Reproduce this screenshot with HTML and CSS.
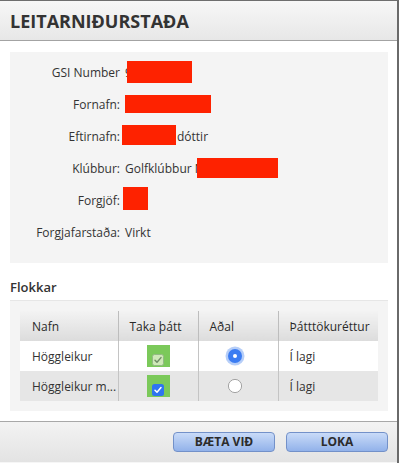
FILE: index.html
```html
<!DOCTYPE html>
<html lang="is">
<head>
<meta charset="utf-8">
<title>Leitarniðurstaða</title>
<link rel="stylesheet" href="styles.css">
</head>
<body>
<div class="dialog">
  <div class="dlg-head"><h1 class="title">LEITARNIÐURSTAÐA</h1></div>
  <div class="dlg-body">
    <div class="info">
      <div class="row"><span class="lbl">GSI Number</span><span class="val"><span class="peek">9</span><span class="mask m-gsi"></span></span></div>
      <div class="row"><span class="lbl">Fornafn:</span><span class="val"><span class="mask m-first"></span></span></div>
      <div class="row"><span class="lbl">Eftirnafn:</span><span class="val"><span class="mask m-last"></span>dóttir</span></div>
      <div class="row"><span class="lbl">Klúbbur:</span><span class="val">Golfklúbbur&nbsp;<span class="peek">N</span><span class="mask m-club"></span></span></div>
      <div class="row"><span class="lbl">Forgjöf:</span><span class="val"><span class="mask m-hcp"></span></span></div>
      <div class="row"><span class="lbl">Forgjafarstaða:</span><span class="val">Virkt</span></div>
    </div>
    <div class="sec-title">Flokkar</div>
    <div class="cat-panel">
      <table class="cats">
        <colgroup><col class="c1"><col class="c2"><col class="c3"><col class="c4"></colgroup>
        <thead>
          <tr><th>Nafn</th><th>Taka þátt</th><th>Aðal</th><th>Þátttökuréttur</th></tr>
        </thead>
        <tbody>
          <tr>
            <td>Höggleikur</td>
            <td class="cb-cell"><span class="cb-wrap"><svg class="cb" viewBox="0 0 12 12" width="12" height="12"><rect x="0.5" y="0.5" width="11" height="11" rx="2" fill="#cfe9b8" stroke="#93b985"/><path d="M3 6.2 L5 8.3 L9 3.6" fill="none" stroke="#6f8b66" stroke-width="1.4" stroke-linecap="round" stroke-linejoin="round"/></svg></span></td>
            <td class="rd-cell"><svg class="rd on" viewBox="0 0 20 20" width="20" height="20"><circle cx="10" cy="10" r="9.5" fill="#a9c6f7" opacity="0.85"/><circle cx="10" cy="10" r="7" fill="#3b7cf2"/><circle cx="10" cy="10" r="2" fill="#fff"/></svg></td>
            <td>Í lagi</td>
          </tr>
          <tr class="alt">
            <td class="ellip">Höggleikur m...</td>
            <td class="cb-cell"><span class="cb-wrap"><svg class="cb" viewBox="0 0 12 12" width="12" height="12"><rect x="0" y="0" width="12" height="12" rx="2.5" fill="#2f74f0"/><path d="M3 6.2 L5 8.3 L9 3.6" fill="none" stroke="#fff" stroke-width="1.5" stroke-linecap="round" stroke-linejoin="round"/></svg></span></td>
            <td class="rd-cell"><svg class="rd" viewBox="0 0 20 20" width="20" height="20"><circle cx="10" cy="10" r="6.6" fill="#fff" stroke="#9a9a9a" stroke-width="0.9"/></svg></td>
            <td>Í lagi</td>
          </tr>
        </tbody>
      </table>
    </div>
  </div>
  <div class="dlg-foot">
    <button class="btn" type="button">BÆTA VIÐ</button>
    <button class="btn" type="button">LOKA</button>
  </div>
</div>
</body>
</html>
```
FILE: styles.css
```css
* { box-sizing: border-box; }
html, body { margin: 0; padding: 0; background: #fff; }
body {
  font-family: "Open Sans", "Liberation Sans", sans-serif;
  font-size: 12px;
  color: #333;
}
.dialog {
  width: 399px;
  height: 463px;
  border-top: 1px solid #6e6e6e;
  border-right: 2px solid #6a6a6a;
  display: flex;
  flex-direction: column;
  background: #fff;
}
.dlg-head {
  height: 40px;
  display: flex;
  align-items: center;
  padding-left: 10px;
  background: linear-gradient(#f7f7f7, #e7e7e7);
  border-bottom: 1px solid #a3a3a3;
}
.title {
  margin: 0;
  font-size: 18px;
  font-weight: 700;
  color: #333;
  letter-spacing: 0;
  line-height: 1;
}
.dlg-body {
  flex: 1;
  padding: 11px 9px 9px 10px;
  display: flex;
  flex-direction: column;
}
.info {
  background: #f4f4f4;
  padding: 4px 0 15px;
}
.row {
  height: 32px;
  display: grid;
  grid-template-columns: 110px 1fr;
  column-gap: 5px;
  align-items: center;
}
.lbl { text-align: right; color: #333; }
.val { display: flex; align-items: center; color: #333; }
.peek { display: inline-block; }
.mask {
  display: inline-block;
  background: #fe2200;
  position: relative;
  z-index: 1;
}
.m-gsi { width: 65px; height: 22px; margin-left: -5px; }
.m-first { width: 86px; height: 18px; }
.m-last { width: 54px; height: 20px; margin-left: -3px; margin-right: 1px; margin-top: -3px; }
.m-club { width: 81px; height: 20px; margin-left: -7px; }
.m-hcp { width: 25px; height: 23px; margin-left: -2px; margin-top: -3px; }
.sec-title {
  margin: 15px 0 4px;
  height: 18px;
  line-height: 18px;
  font-size: 13px;
  font-weight: 600;
  color: #333;
}
.cat-panel {
  background: #f4f4f4;
  border-top: 1px solid #e6e6e6;
  padding: 10px 10px 10px;
}
.cats {
  width: 358px;
  border-collapse: collapse;
  table-layout: fixed;
}
.c1 { width: 98px; }
.c2 { width: 80px; }
.c3 { width: 80px; }
.c4 { width: 100px; }
.cats th, .cats td {
  height: 30px;
  padding: 0 0 0 11px;
  text-align: left;
  font-weight: 400;
  color: #333;
  white-space: nowrap;
  overflow: hidden;
  border-left: 1px solid #c4c4c4;
}
.cats th:first-child, .cats td:first-child { border-left: 0; padding-left: 12px; }
.cats th {
  background: linear-gradient(#f3f3f3, #dcdcdc);
  color: #2a2a2a;
  border-left-color: #bdbdbd;
}
.cats tbody tr { background: #fff; }
.cats tbody tr.alt { background: #e6e6e6; }
.cats td.cb-cell { padding: 0; text-align: center; }
.cb-wrap {
  display: inline-flex;
  width: 23px;
  height: 22px;
  background: #7bc95a;
  align-items: flex-end;
  justify-content: center;
  padding-bottom: 1px;
  vertical-align: middle;
}
.cb { display: block; }
.cats td.rd-cell { padding: 0 6px 0 0; text-align: center; }
.rd { display: inline-block; vertical-align: middle; }
.dlg-foot {
  height: 42px;
  border-top: 1px solid #a8a8a8;
  border-bottom: 1px solid #f6f6f6;
  background: linear-gradient(#f3f3f3, #e3e3e3);
  display: flex;
  justify-content: flex-end;
  align-items: center;
  gap: 11px;
  padding-right: 9px;
}
.btn {
  width: 102px;
  height: 20px;
  padding: 0;
  border: 1px solid #7391c9;
  border-radius: 4px;
  background: linear-gradient(#c9dbf8, #92b2ea);
  font-family: "Open Sans", "Liberation Sans", sans-serif;
  font-size: 12px;
  font-weight: 700;
  color: #2c2c2c;
  line-height: 18px;
}
```
